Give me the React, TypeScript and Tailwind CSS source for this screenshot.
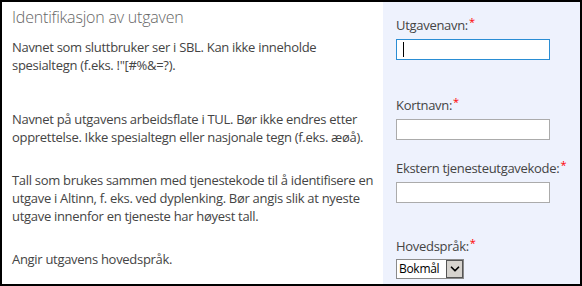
import { ChevronDown } from 'lucide-react';

const font = { fontFamily: '"Open Sans", "Noto Sans", sans-serif' };

function Required() {
  return <span className="relative -top-[4px] ml-px text-[11px] text-[#ff0000]">*</span>;
}

function Label({ text }: { text: string }) {
  return (
    <div className="h-[18px] text-[13px] leading-[18px] tracking-[-0.3px] text-[#444]">
      {text}
      <Required />
    </div>
  );
}

function TextInput({ focused }: { focused?: boolean }) {
  return (
    <div
      className={
        focused
          ? 'mt-[5px] flex h-[21px] w-[154px] items-center border border-[#2a8dd4] bg-white pl-[6px]'
          : 'mt-[5px] h-[21px] w-[154px] border border-[#ababab] bg-white'
      }
    >
      {focused && <div className="h-[15px] w-px bg-black" />}
    </div>
  );
}

export default function App() {
  return (
    <div
      className="flex h-[286px] w-[582px] border-2 border-black bg-white text-[13px] text-[#444]"
      style={font}
    >
      {/* Beskrivelser */}
      <div className="w-[381px] pl-[10px] leading-[18px] tracking-[-0.3px]">
        <h1 className="mt-[4px] h-[22px] text-[16px] font-light leading-[22px] tracking-[-0.2px] text-[#666]">
          Identifikasjon av utgaven
        </h1>
        <p className="mt-[10px] h-[72px]">
          Navnet som sluttbruker ser i SBL. Kan ikke inneholde
          <br />
          spesialtegn (f.eks. !"[#%&amp;=?).
        </p>
        <p className="h-[61px]">
          Navnet på utgavens arbeidsflate i TUL. Bør ikke endres etter
          <br />
          opprettelse. Ikke spesialtegn eller nasjonale tegn (f.eks. æøå).
        </p>
        <p className="h-[79px]">
          Tall som brukes sammen med tjenestekode til å identifisere en
          <br />
          utgave i Altinn, f. eks. ved dyplenking. Bør angis slik at nyeste
          <br />
          utgave innenfor en tjeneste har høyest tall.
        </p>
        <p>Angir utgavens hovedspråk.</p>
      </div>

      {/* Felter */}
      <div className="flex-1 bg-[#eef2fd] pl-[13px] pt-[14px]">
        <Label text="Utgavenavn:" />
        <TextInput focused />

        <div className="mt-[36px]">
          <Label text="Kortnavn:" />
          <TextInput />
        </div>

        <div className="mt-[19px]">
          <Label text="Ekstern tjenesteutgavekode:" />
          <TextInput />
        </div>

        <div className="mt-[34px]">
          <Label text="Hovedspråk:" />
          <div className="mt-[4px] flex h-[20px] w-[68px] items-center border border-[#8a8a8a] bg-white">
            <span className="flex-1 pl-[2px] text-[12px] leading-[18px] tracking-[-0.3px] text-black">Bokmål</span>
            <span className="flex h-[18px] w-[17px] items-center justify-center border border-[#555] bg-[#d6d3ce]">
              <ChevronDown size={14} strokeWidth={3} className="text-black" />
            </span>
          </div>
        </div>
      </div>
    </div>
  );
}
